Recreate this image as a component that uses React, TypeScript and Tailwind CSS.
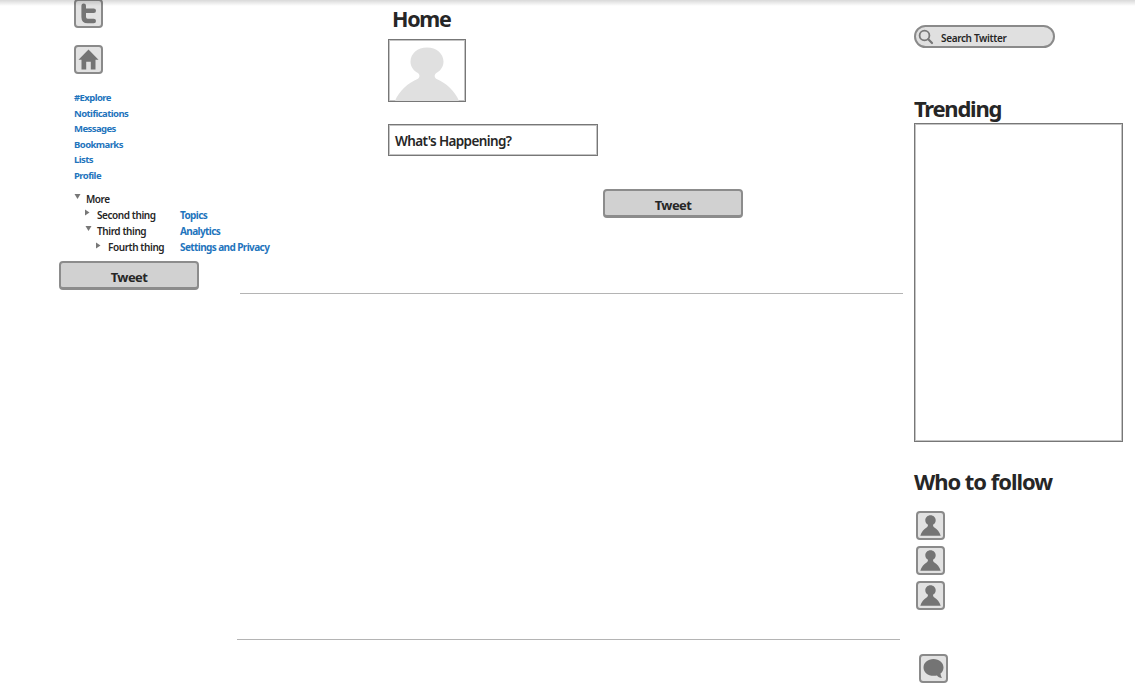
import React from "react";

function IconBox({ children, className = "" }: { children: React.ReactNode; className?: string }) {
  return (
    <div className={`h-[29px] w-[29px] shrink-0 rounded-[4px] border-2 border-[#8a8a8a] bg-[#e2e2e2] ${className}`}>
      <svg viewBox="1.500 1.500 25 25" className="block h-full w-full" fill="#747474">
        {children}
      </svg>
    </div>
  );
}

function PersonIcon({ className = "" }: { className?: string }) {
  return (
    <IconBox className={className}>
      <path d="M14 3.800c2.900 0 5.200 2.200 5.200 5 0 2-1.100 3.700-2.700 4.500 0 1.200.4 2 1.400 2.700 2.900 1.800 5 4 6.300 8.200H3.800c1.300-4.200 3.400-6.400 6.300-8.200 1-.7 1.400-1.500 1.400-2.700-1.600-.8-2.700-2.500-2.700-4.500 0-2.800 2.300-5 5.200-5z" />
    </IconBox>
  );
}

function TweetButton({ className = "" }: { className?: string }) {
  return (
    <button
      className={`flex h-[29px] w-[140px] items-center justify-center rounded-[4px] border-2 border-b-[3px] border-[#8c8c8c] bg-[#d1d1d1] pt-[4px] text-[13px] leading-none font-bold tracking-[-0.600px] text-[#262626] ${className}`}
    >
      Tweet
    </button>
  );
}

function Arrow({ open }: { open?: boolean }) {
  return (
    <svg viewBox="0 0 7 7" className="-mt-[4px] h-[7px] w-[7px] shrink-0" fill="#777">
      {open ? <path d="M.5 1h6L3.500 6z" /> : <path d="M1 .5v6L5.500 3.500z" />}
    </svg>
  );
}

const links = ["#Explore", "Notifications", "Messages", "Bookmarks", "Lists", "Profile"];

const tree = [
  { label: "More", open: true, pad: "pl-0", gap: "gap-[5px]", link: "" },
  { label: "Second thing", open: false, pad: "pl-[10px]", gap: "gap-[6px]", link: "Topics" },
  { label: "Third thing", open: true, pad: "pl-[11px]", gap: "gap-[5px]", link: "Analytics" },
  { label: "Fourth thing", open: false, pad: "pl-[21px]", gap: "gap-[6px]", link: "Settings and Privacy" },
];

function Sidebar() {
  return (
    <nav className="w-[237px] shrink-0 pl-[59px]">
      <div className="pl-[15px]">
        <IconBox className="-mt-px">
          <path
            d="M9.200 6.200v11.300Q9.200 21.500 13.200 21.500H19.200M9.200 11.200h10"
            fill="none"
            stroke="#747474"
            strokeWidth="4.600"
            strokeLinecap="round"
            strokeLinejoin="round"
          />
        </IconBox>
        <IconBox className="mt-[17px]">
          <path d="M14 4l10 10.200h-3V24h-4.700v-7.800h-4.600V24H7v-9.800H4z" />
        </IconBox>
        <ul className="mt-[16px]">
          {links.map((label) => (
            <li key={label} className="h-[15.500px] text-[9.500px] leading-[15.500px] font-bold tracking-[-0.560px] text-[#1f75bd]">
              {label}
            </li>
          ))}
        </ul>
        <ul className="mt-[7.500px]">
          {tree.map((t) => (
            <li key={t.label} className="flex h-[16.200px] text-[10px] leading-[16.200px] font-semibold tracking-[-0.420px] whitespace-nowrap">
              <div className={`flex w-[106px] shrink-0 items-center ${t.pad} ${t.gap}`}>
                <Arrow open={t.open} />
                <span className="text-[#262626]">{t.label}</span>
              </div>
              <span className="font-bold tracking-[-0.600px] text-[#1f75bd]">{t.link}</span>
            </li>
          ))}
        </ul>
      </div>
      <TweetButton className="mt-[6px]" />
    </nav>
  );
}

function Feed() {
  return (
    <main className="w-[666px] shrink-0">
      <div className="flex h-[293px] flex-col items-start pl-[151px]">
        <h1 className="mt-[4px] h-[35px] pl-[4px] text-[21.500px] leading-[30px] font-bold tracking-[-1.300px]">Home</h1>
        <div className="h-[63px] w-[78px] border border-[#777] shadow-[inset_0_0_0_1px_#c4c4c4]">
          <svg viewBox="0 0 76 61" className="block h-full w-full" fill="#e0e0e0">
            <path d="M38 7.500c9.500 0 16.500 6.200 16.500 14 0 5.200-2.800 9-7.200 11.500-2.300 1.700-2 4.700.4 6C57 43 66 51 70 61H6c4-10 13-18 22.500-22 2.400-1.300 2.700-4.300.4-6-4.400-2.500-7.400-6.300-7.400-11.500 0-7.800 7-14 16.500-14z" />
          </svg>
        </div>
        <div className="mt-[22px] flex h-[32px] w-[210px] items-center border border-[#777] pt-[3px] pl-[6px] text-[13.500px] leading-none font-semibold tracking-[-0.620px] shadow-[inset_0_0_0_1px_#c4c4c4]">
          What's Happening?
        </div>
        <TweetButton className="mt-[33px] ml-[215px]" />
      </div>
      <hr className="ml-[3px] h-px w-[663px] border-0 bg-[#b4b4b4]" />
      <hr className="mt-[345px] h-px w-[663px] border-0 bg-[#b4b4b4]" />
    </main>
  );
}

function Aside() {
  return (
    <aside className="ml-[11px] w-[209px] shrink-0">
      <div className="mt-[25px] flex h-[23px] w-[141px] items-center rounded-full border-2 border-[#8a8a8a] bg-[#e0e0e0] pl-[2px]">
        <svg viewBox="0 0 16 16" className="h-[16px] w-[16px]" fill="none" stroke="#777" strokeLinecap="round">
          <circle cx="6.500" cy="6.500" r="4.900" strokeWidth="1.800" />
          <path d="M10.300 10.300l3.700 3.700" strokeWidth="2.200" />
        </svg>
        <span className="pt-[3px] pl-[7px] text-[10px] leading-none font-semibold tracking-[-0.350px]">Search Twitter</span>
      </div>
      <h2 className="mt-[45px] h-[30px] text-[22px] leading-[30px] font-bold tracking-[-1.250px]">Trending</h2>
      <div className="h-[319px] w-[209px] border border-[#777] shadow-[inset_0_0_0_1px_#c4c4c4]" />
      <h2 className="mt-[24px] h-[45px] text-[22px] leading-[30px] font-bold tracking-[-1.050px] whitespace-nowrap">Who to follow</h2>
      <div className="flex flex-col gap-[6px] pl-[2px]">
        <PersonIcon />
        <PersonIcon />
        <PersonIcon />
      </div>
      <IconBox className="mt-[44px] ml-[5px]">
        <path d="M14 4.500c5.700 0 10 3.700 10 8.400 0 2.500-1.200 4.700-3 6.200.2 1.700.6 3.100 1.500 4.500-2.300-.4-4-1.300-5-2.700-1 .3-2.200.4-3.500.4-5.700 0-10-3.700-10-8.400s4.300-8.400 10-8.400z" />
      </IconBox>
    </aside>
  );
}

export default function App() {
  return (
    <div
      className="relative flex h-[693px] w-[1135px] items-start overflow-hidden bg-white text-[#262626]"
      style={{ fontFamily: '"Noto Sans", "Open Sans", sans-serif' }}
    >
      <Sidebar />
      <Feed />
      <Aside />
      <div className="pointer-events-none absolute inset-x-0 top-0 h-[6px] bg-linear-to-b from-black/15 to-transparent" />
    </div>
  );
}
